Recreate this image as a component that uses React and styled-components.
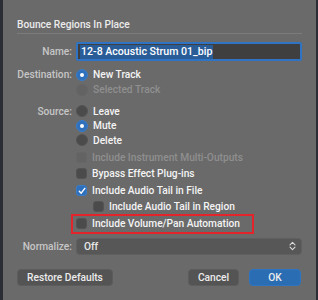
import React from "react";
import styled, { createGlobalStyle } from "styled-components";

const GlobalStyle = createGlobalStyle`
  html, body {
    margin: 0;
    padding: 0;
    background: #2a2d33;
  }
  body {
    font-family: Roboto, "Liberation Sans", sans-serif;
    -webkit-font-smoothing: antialiased;
  }
`;

const Page = styled.div`
  width: 318px;
  height: 300px;
  display: flex;
  overflow: hidden;
`;

const Dialog = styled.div`
  margin-left: 3px;
  width: 313px;
  height: 300px;
  box-sizing: border-box;
  background: #6a6a6a;
  padding: 18px 14px 0 14px;
  display: flex;
  flex-direction: column;
`;

const Title = styled.div`
  font-size: 10.2px;
  font-weight: 500;
  line-height: 14px;
  color: #ececec;
`;

const Separator = styled.div`
  height: 1px;
  background: #7b7b7b;
  margin-top: 1px;
`;

const Row = styled.div`
  display: grid;
  grid-template-columns: 55px 1fr;
  column-gap: 4px;
  align-items: center;
  height: ${(p) => p.$h || 16}px;
  margin-top: ${(p) => p.$mt || 0}px;
`;

const Label = styled.div`
  text-align: right;
  font-size: 10.2px;
  font-weight: 500;
  color: #c6c6c6;
  white-space: nowrap;
`;

const Control = styled.div`
  display: flex;
  align-items: center;
  padding-left: ${(p) => p.$indent || 0}px;
  min-width: 0;
`;

const Field = styled.div`
  height: 19px;
  box-sizing: border-box;
  border: 2px solid #2f74c4;
  border-radius: 2px;
  background: #3f3f3f;
  display: flex;
  align-items: center;
  padding-left: 2px;
`;

const Selection = styled.span`
  background: #2a5d98;
  color: #ffffff;
  font-size: 10.6px;
  font-weight: 500;
  line-height: 14px;
  padding: 0 1px;
`;

const Option = styled.label`
  display: flex;
  align-items: center;
  gap: 5px;
  font-size: 10.2px;
  font-weight: 500;
  color: ${(p) => (p.$disabled ? "#8f8f8f" : "#f4f4f4")};
  white-space: nowrap;
`;

const Radio = styled.span`
  width: 12px;
  height: 12px;
  border-radius: 50%;
  box-sizing: border-box;
  display: flex;
  align-items: center;
  justify-content: center;
  background: ${(p) => (p.$on ? "#2f70bd" : p.$disabled ? "#636363" : "#4b4b4b")};
  border: 1px solid ${(p) => (p.$on ? "#3a7cc8" : p.$disabled ? "#666" : "#545454")};

  &::after {
    content: "";
    display: ${(p) => (p.$on ? "block" : "none")};
    width: 4px;
    height: 4px;
    border-radius: 50%;
    background: #ffffff;
  }
`;

const Box = styled.span`
  width: 11px;
  height: 11px;
  border-radius: 3px;
  box-sizing: border-box;
  display: flex;
  align-items: center;
  justify-content: center;
  background: ${(p) => (p.$on ? "#2f70bd" : p.$disabled ? "#636363" : "#4b4b4b")};
  border: 1px solid ${(p) => (p.$on ? "#3a7cc8" : p.$disabled ? "#666" : "#545454")};
`;

const Highlight = styled.div`
  margin-left: -5px;
  width: 183px;
  height: 20px;
  box-sizing: border-box;
  border: 2px solid #e3242b;
  padding-left: 3px;
  display: flex;
  align-items: center;
`;

const Popup = styled.div`
  height: 17px;
  box-sizing: border-box;
  border-radius: 4px;
  background: #575757;
  border: 1px solid #5f5f5f;
  display: flex;
  align-items: center;
  justify-content: space-between;
  padding: 0 5px 0 7px;
  font-size: 10.2px;
  font-weight: 500;
  color: #e8e8e8;
`;

const Footer = styled.div`
  display: flex;
  align-items: center;
  margin-top: 14px;
`;

const Button = styled.button`
  height: 17px;
  width: ${(p) => p.$w}px;
  margin-left: ${(p) => p.$ml || 0}px;
  padding: 0;
  border-radius: 4px;
  border: 1px solid ${(p) => (p.$primary ? "#2f74c0" : "#5c5c5c")};
  background: ${(p) => (p.$primary ? "#2b6db3" : "#545454")};
  color: #ececec;
  font-family: inherit;
  font-size: 10.2px;
  font-weight: 500;
  line-height: 15px;
`;

const Check = () => (
  <svg width="8" height="8" viewBox="0 0 8 8">
    <path d="M1.3 4.2 L3.2 6.2 L6.8 1.4" fill="none" stroke="#fff" strokeWidth="1.4" strokeLinecap="round" strokeLinejoin="round" />
  </svg>
);

const Chevrons = () => (
  <svg width="7" height="10" viewBox="0 0 7 10">
    <path d="M1 3.8 L3.5 1.3 L6 3.8 M1 6.2 L3.5 8.7 L6 6.2" fill="none" stroke="#d8d8d8" strokeWidth="1.1" strokeLinecap="round" strokeLinejoin="round" />
  </svg>
);

const RadioOption = ({ on, disabled, children }) => (
  <Option $disabled={disabled}>
    <Radio $on={on} $disabled={disabled} />
    {children}
  </Option>
);

const CheckOption = ({ on, disabled, children }) => (
  <Option $disabled={disabled}>
    <Box $on={on} $disabled={disabled}>{on && <Check />}</Box>
    {children}
  </Option>
);

export default function App() {
  return (
    <Page>
      <GlobalStyle />
      <Dialog>
        <Title>Bounce Regions In Place</Title>
        <Separator />

        <Row $h={19} $mt={8}>
          <Label>Name:</Label>
          <Field>
            <Selection>12-8 Acoustic Strum 01_bip</Selection>
          </Field>
        </Row>

        <Row $h={15} $mt={6}>
          <Label>Destination:</Label>
          <Control>
            <RadioOption on>New Track</RadioOption>
          </Control>
        </Row>
        <Row $h={15}>
          <Label />
          <Control>
            <RadioOption disabled>Selected Track</RadioOption>
          </Control>
        </Row>

        <Row $h={14.5} $mt={7}>
          <Label>Source:</Label>
          <Control>
            <RadioOption>Leave</RadioOption>
          </Control>
        </Row>
        <Row $h={14.5}>
          <Label />
          <Control>
            <RadioOption on>Mute</RadioOption>
          </Control>
        </Row>
        <Row $h={14.5}>
          <Label />
          <Control>
            <RadioOption>Delete</RadioOption>
          </Control>
        </Row>

        <Row $mt={2}>
          <Label />
          <Control>
            <CheckOption disabled>Include Instrument Multi-Outputs</CheckOption>
          </Control>
        </Row>
        <Row>
          <Label />
          <Control>
            <CheckOption>Bypass Effect Plug-ins</CheckOption>
          </Control>
        </Row>
        <Row $mt={1}>
          <Label />
          <Control>
            <CheckOption on>Include Audio Tail in File</CheckOption>
          </Control>
        </Row>
        <Row>
          <Label />
          <Control $indent={17}>
            <CheckOption>Include Audio Tail in Region</CheckOption>
          </Control>
        </Row>
        <Row $h={20} $mt={-1}>
          <Label />
          <Control>
            <Highlight>
              <CheckOption>Include Volume/Pan Automation</CheckOption>
            </Highlight>
          </Control>
        </Row>

        <Row $h={17} $mt={4}>
          <Label>Normalize:</Label>
          <Popup>
            Off
            <Chevrons />
          </Popup>
        </Row>

        <Footer>
          <Button $w={96}>Restore Defaults</Button>
          <Button $w={51} $ml={75}>Cancel</Button>
          <Button $w={52} $ml={10} $primary>OK</Button>
        </Footer>
      </Dialog>
    </Page>
  );
}
